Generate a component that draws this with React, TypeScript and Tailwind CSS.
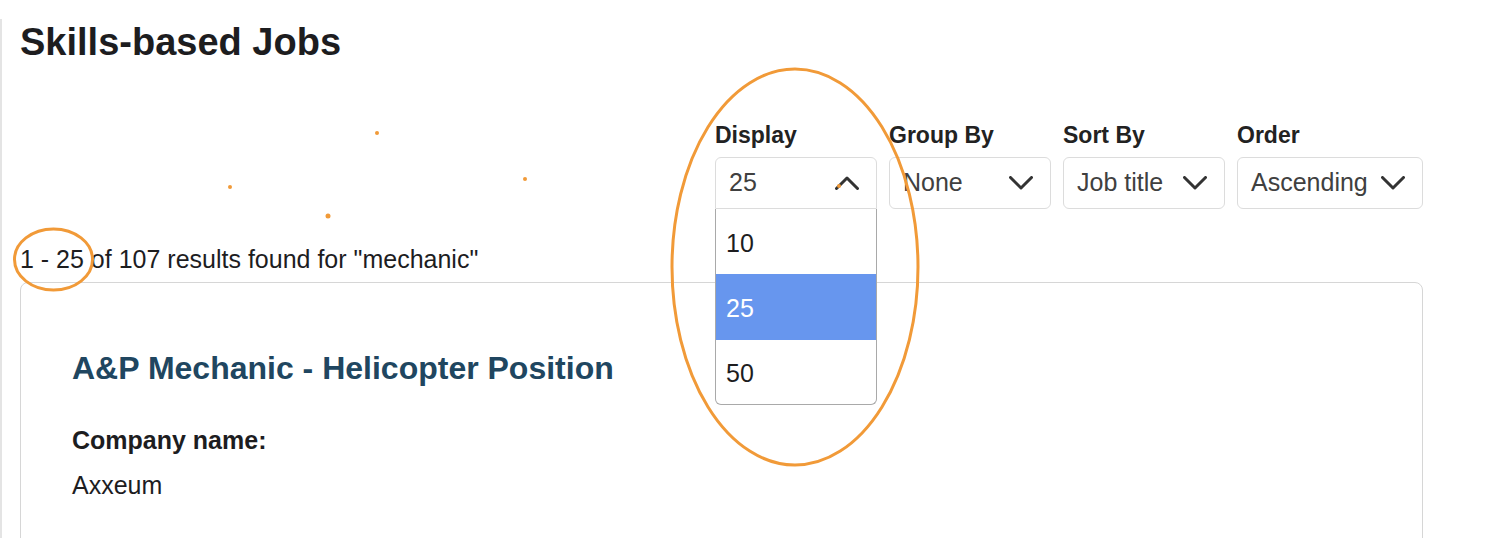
import React from "react";

const Chevron = ({ up = false }: { up?: boolean }) => (
  <svg width="24" height="14" viewBox="0 0 24 14" fill="none" className="shrink-0">
    <polyline
      points={up ? "1.5,12.5 12,2 22.5,12.5" : "1.5,1.5 12,12 22.5,1.5"}
      stroke="#333333"
      strokeWidth="3"
      strokeLinecap="round"
      strokeLinejoin="round"
    />
  </svg>
);

interface FilterProps {
  label: string;
  value: string;
  width: string;
  open?: boolean;
}

const Filter: React.FC<FilterProps> = ({ label, value, width, open = false }) => (
  <div className={`relative ${width}`}>
    <div className="text-[23px] leading-[30px] font-bold text-[#222]">{label}</div>
    <div
      className={`mt-[7px] flex h-[52px] items-center justify-between border border-[#dcdcdc] bg-white pl-[13px] pr-[17px] text-[25px] text-[#404040] ${
        open ? "rounded-t-md" : "rounded-md"
      }`}
    >
      <span>{value}</span>
      <Chevron up={open} />
    </div>
    {open && (
      <ul className="absolute left-0 top-full z-10 w-full rounded-b-md border border-t-0 border-[#a9a9a9] bg-white text-[25px] text-[#1d1d1f]">
        <li className="flex h-[65px] items-center pl-[10px] pt-1">10</li>
        <li className="flex h-[66px] items-center bg-[#6796ee] pl-[10px] pt-1 text-white">25</li>
        <li className="flex h-[64px] items-center pl-[10px] pt-1">50</li>
      </ul>
    )}
  </div>
);

export default function App() {
  return (
    <div className="relative h-[538px] overflow-hidden bg-white font-['Liberation_Sans',Arial,sans-serif]">
      <div className="pt-2">
        <div className="min-h-[530px] border-l-2 border-[#e4e4e4] pl-[18px]">
          <div className="w-[1403px]">
            <h1 className="mt-[11px] text-[38px] leading-[46px] font-bold text-[#1d1d1f]">Skills-based Jobs</h1>

            <div className="mt-[55px] flex justify-end gap-3">
              <Filter label="Display" value="25" width="w-[162px]" open />
              <Filter label="Group By" value="None" width="w-[162px]" />
              <Filter label="Sort By" value="Job title" width="w-[162px]" />
              <Filter label="Order" value="Ascending" width="w-[186px]" />
            </div>

            <p className="mt-[35px] text-[25px] leading-[30px] text-[#1d1d1f]">
              1 - 25 of 107 results found for "mechanic"
            </p>

            <div className="mt-2 h-[300px] rounded-lg border border-[#d6d6d6] pl-[51px] pt-[66px]">
              <h2 className="text-[32px] leading-[38px] font-bold text-[#204660]">
                A&amp;P Mechanic - Helicopter Position
              </h2>
              <div className="mt-[38px] text-[25px] leading-[30px] font-bold text-[#1d1d1f]">Company name:</div>
              <div className="mt-[15px] text-[25px] leading-[30px] text-[#1d1d1f]">Axxeum</div>
            </div>
          </div>
        </div>
      </div>

      {/* hand-drawn annotations on top of the screenshot */}
      <svg className="pointer-events-none absolute inset-0 z-20" width="1498" height="538" viewBox="0 0 1498 538">
        <ellipse cx="795" cy="267" rx="123" ry="198" fill="none" stroke="#f19a38" strokeWidth="3" />
        <ellipse cx="53.5" cy="259.5" rx="39" ry="30.5" fill="none" stroke="#f19a38" strokeWidth="3" />
        <circle cx="377" cy="133" r="2" fill="#f19a38" />
        <circle cx="230" cy="187" r="2" fill="#f19a38" />
        <circle cx="525" cy="179" r="2" fill="#f19a38" />
        <circle cx="328" cy="216" r="2.5" fill="#f19a38" />
        <circle cx="839" cy="186" r="2" fill="#f19a38" />
      </svg>
    </div>
  );
}
